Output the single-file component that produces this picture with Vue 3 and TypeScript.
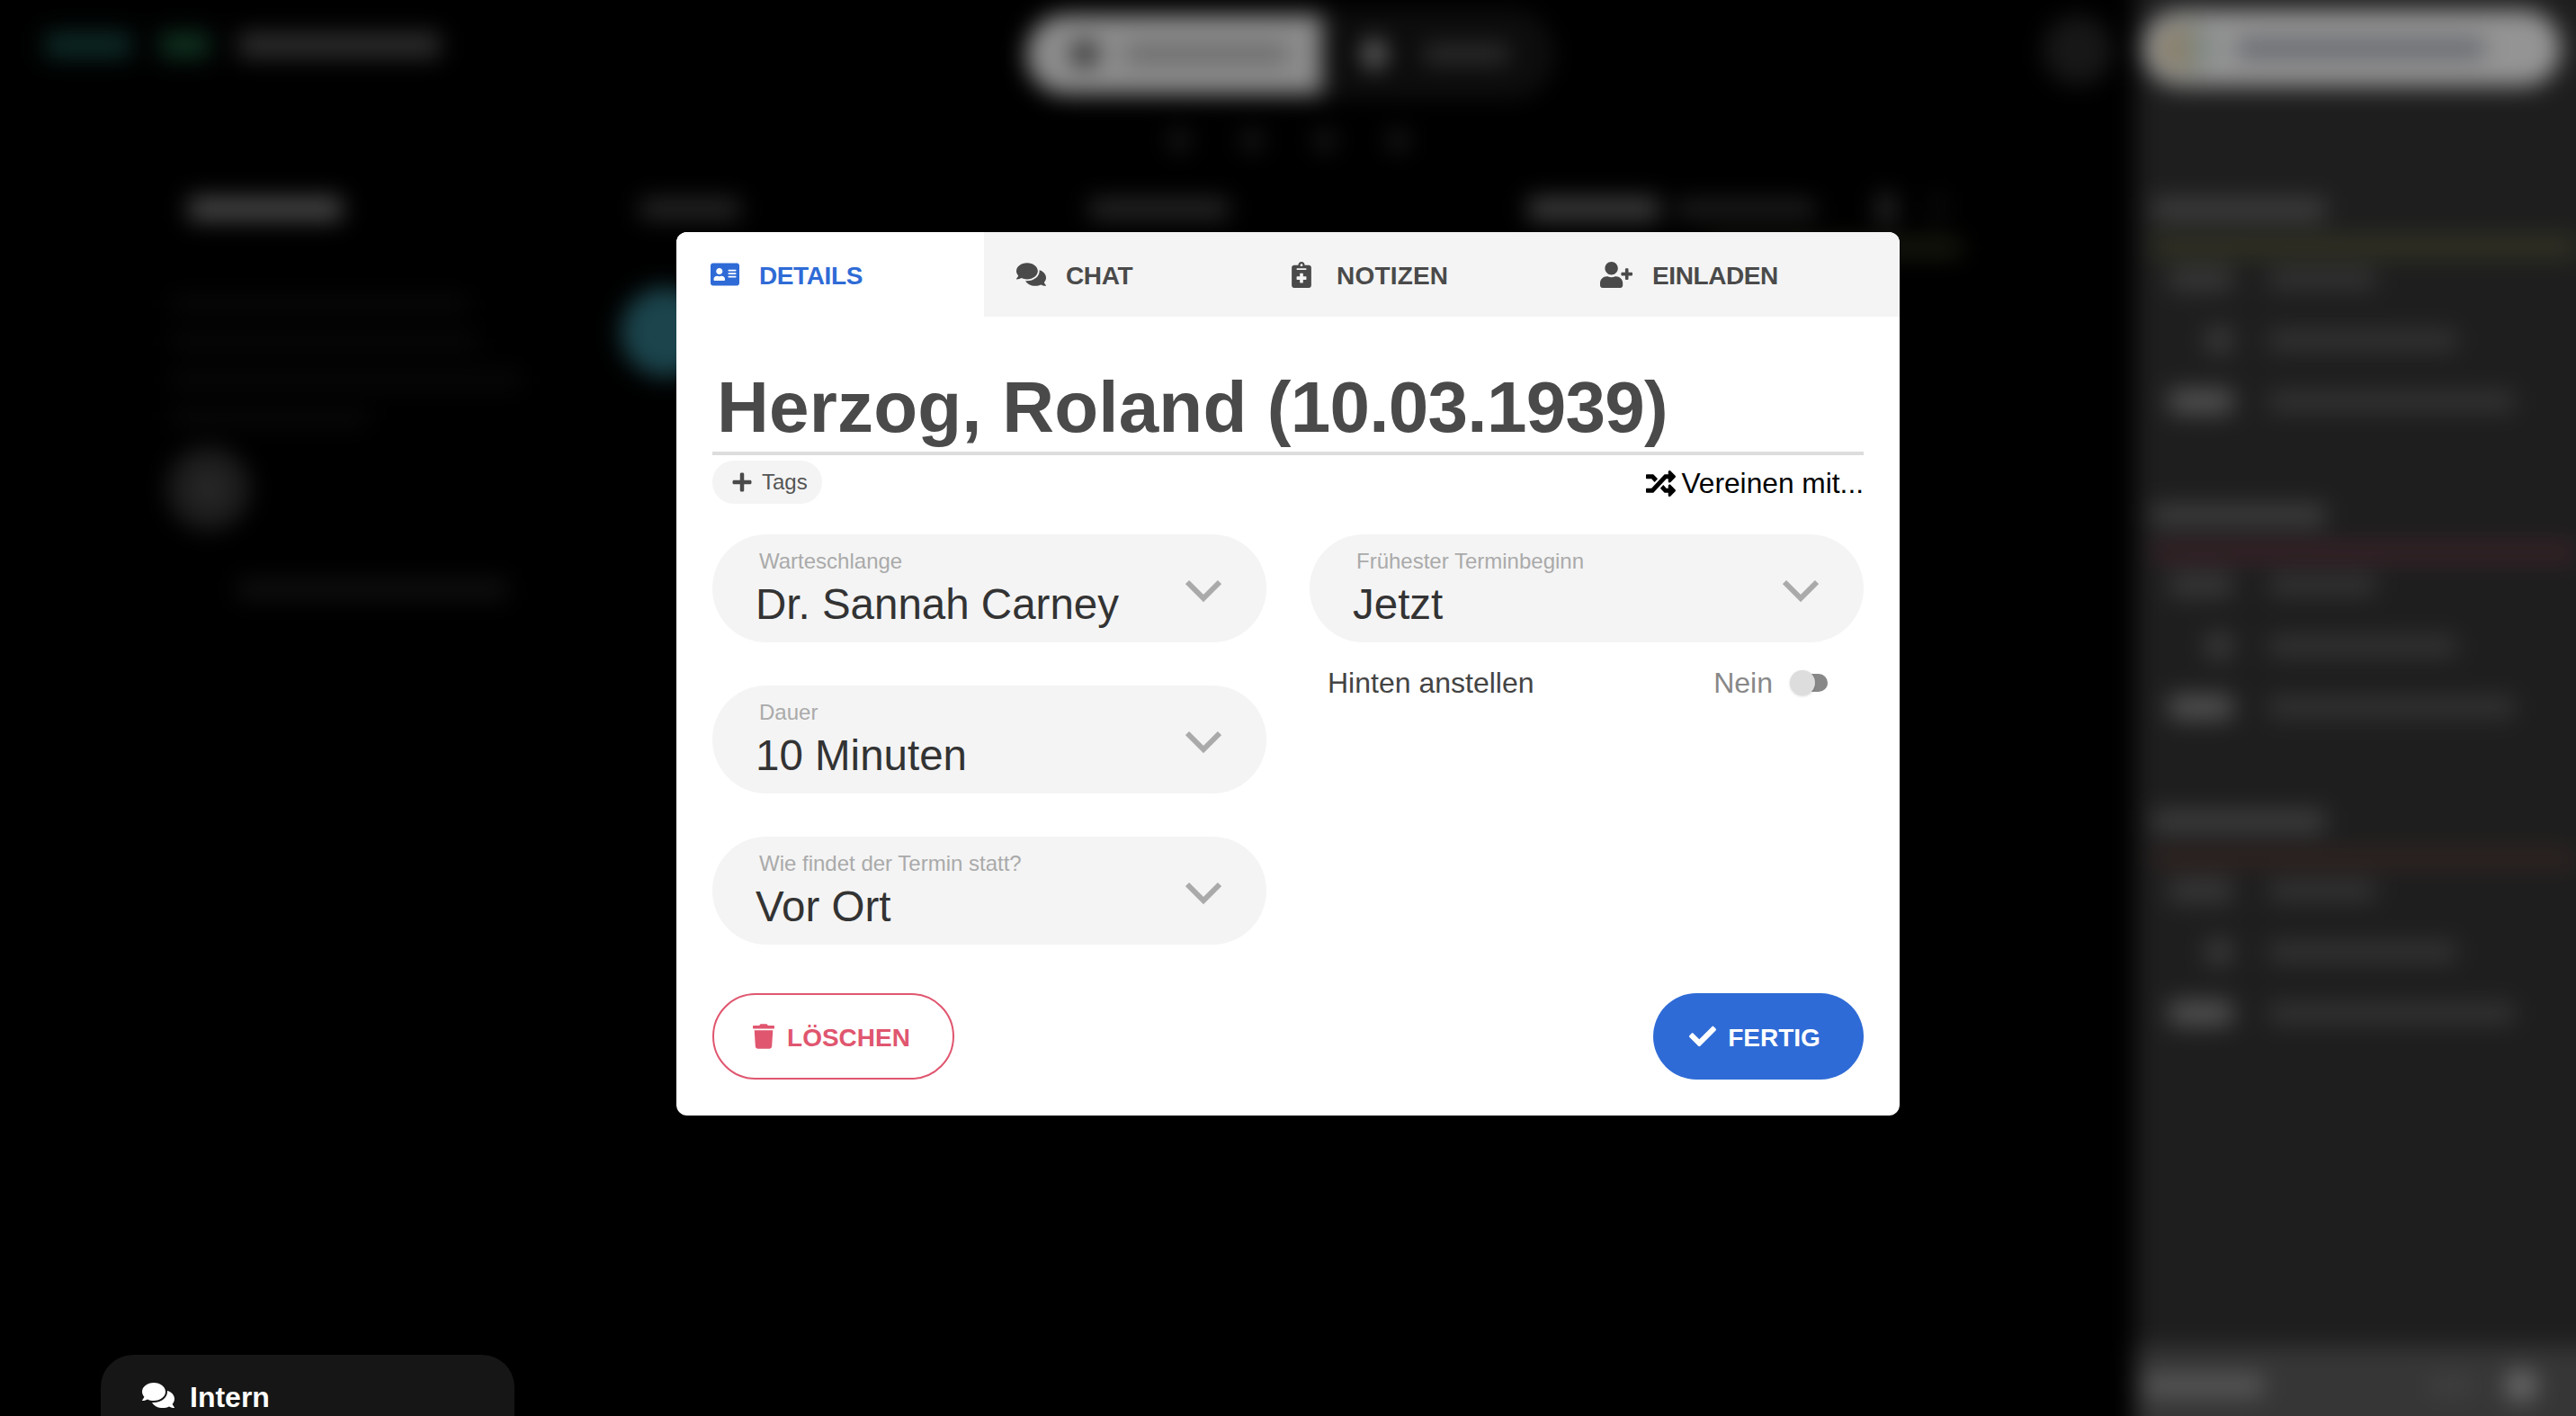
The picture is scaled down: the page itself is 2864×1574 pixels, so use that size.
<template>
  <div class="page">
    <!-- blurred app behind the dialog -->
    <div class="backdrop">
      <div class="main">
        <div class="topbar">
          <div class="logo">
            <div class="logoTeal"></div>
            <div class="logoGreen"></div>
            <div class="logoName"></div>
          </div>
          <div class="pillActive">
            <div class="pillDot"></div>
            <div class="pillText"></div>
          </div>
          <div class="pillIdle">
            <div class="idleDot"></div>
            <div class="idleText"></div>
          </div>
          <div class="roundBtn"></div>
        </div>
        <div class="dots">
          <div v-for="i in 4" :key="i" class="dot"></div>
        </div>
        <div class="heads">
          <div class="headMain"></div>
          <div class="headSmall first"></div>
          <div class="headSmall second"></div>
          <div class="headDate"></div>
          <div class="headDateDim"></div>
          <div class="headMark"></div>
          <div class="headMark far"></div>
        </div>
        <div class="dateStrip"></div>
        <div class="content">
          <div class="leftCol">
            <div v-for="w in leftLines" :key="w" class="faintLine" :style="{ width: w + 'px' }"></div>
            <div class="addCircle"></div>
            <div class="leftFoot"></div>
          </div>
          <div class="tealCircle"></div>
        </div>
      </div>
      <div class="side">
        <div class="userPill">
          <div class="avatar"></div>
          <div class="userName"></div>
        </div>
        <div v-for="s in sections" :key="s.accent" class="section">
          <div class="sectionHead"></div>
          <div class="sectionBar" :style="{ background: s.accent }"></div>
          <div class="row firstRow">
            <div class="iconCell"><div class="rowIcon wide dim"></div></div>
            <div class="rowText" :style="{ width: '118px' }"></div>
          </div>
          <div class="row">
            <div class="iconCell"><div class="rowIcon"></div></div>
            <div class="rowText" :style="{ width: '208px' }"></div>
          </div>
          <div class="row">
            <div class="iconCell"><div class="rowIcon wide"></div></div>
            <div class="rowText" :style="{ width: '272px' }"></div>
          </div>
        </div>
        <div class="sideFoot">
          <div class="footText"></div>
          <div class="footDim"></div>
          <div class="footDot"></div>
        </div>
      </div>
    </div>

    <div class="dock">
      <svg class="dockIcon" viewBox="0 0 576 512"><path :d="icons.comments" /></svg>
      <span>Intern</span>
    </div>

    <div class="overlay">
      <div class="dialog">
        <div class="tabs">
          <div v-for="t in tabs" :key="t.label" class="tab" :class="{ active: t.active }">
            <svg :class="t.cls" :viewBox="t.box"><path :d="t.path" /></svg>
            <span>{{ t.label }}</span>
          </div>
        </div>

        <div class="body">
          <div class="title"><span class="titleName">Herzog, Roland</span> <span class="titleDate">(10.03.1939)</span></div>

          <div class="tagRow">
            <div class="tagChip">
              <svg class="plusIcon" viewBox="0 0 448 512"><path :d="icons.plus" /></svg>
              <span>Tags</span>
            </div>
            <div class="merge">
              <svg class="mergeIcon" viewBox="0 0 512 512"><path :d="icons.random" /></svg>
              <span>Vereinen mit...</span>
            </div>
          </div>

          <div class="form">
            <div class="column">
              <div v-for="f in leftFields" :key="f.label" class="select">
                <div class="selectText">
                  <div class="selectLabel">{{ f.label }}</div>
                  <div class="selectValue">{{ f.value }}</div>
                </div>
                <svg class="chevron" viewBox="0 0 40 26"><polyline points="2,3 20,21 38,3" /></svg>
              </div>
            </div>
            <div class="column right">
              <div class="select">
                <div class="selectText">
                  <div class="selectLabel">Frühester Terminbeginn</div>
                  <div class="selectValue">Jetzt</div>
                </div>
                <svg class="chevron" viewBox="0 0 40 26"><polyline points="2,3 20,21 38,3" /></svg>
              </div>
              <div class="switchRow">
                <span class="switchLabel">Hinten anstellen</span>
                <span class="switchState">Nein</span>
                <div class="toggle"><div class="knob"></div></div>
              </div>
            </div>
          </div>

          <div class="actions">
            <button class="btn danger">
              <svg class="trashIcon" viewBox="0 0 448 512"><path :d="icons.trash" /></svg>
              <span>LÖSCHEN</span>
            </button>
            <button class="btn primary">
              <svg class="checkIcon" viewBox="0 0 512 512"><path :d="icons.check" /></svg>
              <span>FERTIG</span>
            </button>
          </div>
        </div>
      </div>
    </div>
  </div>
</template>

<script setup lang="ts">
const icons = {
  idCard:
    'M528 32H48C21.5 32 0 53.5 0 80v352c0 26.5 21.5 48 48 48h480c26.5 0 48-21.5 48-48V80c0-26.5-21.5-48-48-48zm-352 96c35.3 0 64 28.7 64 64s-28.7 64-64 64-64-28.7-64-64 28.7-64 64-64zm112 236.8c0 10.6-10 19.2-22.4 19.2H86.4C74 384 64 375.4 64 364.8v-19.2c0-31.8 30.1-57.6 67.2-57.6h5c12.3 5.1 25.7 8 39.8 8s27.6-2.9 39.8-8h5c37.1 0 67.2 25.8 67.2 57.6v19.2zM512 312c0 4.4-3.6 8-8 8H360c-4.4 0-8-3.6-8-8v-16c0-4.4 3.6-8 8-8h144c4.4 0 8 3.6 8 8v16zm0-64c0 4.4-3.6 8-8 8H360c-4.4 0-8-3.6-8-8v-16c0-4.4 3.6-8 8-8h144c4.4 0 8 3.6 8 8v16zm0-64c0 4.4-3.6 8-8 8H360c-4.4 0-8-3.6-8-8v-16c0-4.4 3.6-8 8-8h144c4.4 0 8 3.6 8 8v16z',
  comments:
    'M416 192c0-88.4-93.1-160-208-160S0 103.6 0 192c0 34.3 14.1 65.9 38 92-13.4 30.2-35.5 54.2-35.8 54.5-2.2 2.3-2.8 5.7-1.5 8.7S4.8 352 8 352c36.6 0 66.9-12.3 88.7-25 32.2 15.7 70.3 25 111.3 25 114.9 0 208-71.6 208-160zm122 220c23.9-26 38-57.7 38-92 0-66.9-53.5-124.2-129.3-148.1.9 6.6 1.3 13.3 1.3 20.1 0 105.9-107.7 192-240 192-10.8 0-21.3-.8-31.7-1.9C207.8 439.6 281.8 480 368 480c41 0 79.1-9.2 111.3-25 21.8 12.7 52.1 25 88.7 25 3.2 0 6.1-1.9 7.3-4.8 1.3-2.9.7-6.3-1.5-8.7-.3-.3-22.4-24.2-35.8-54.5z',
  notes:
    'M336 64h-80c0-35.3-28.7-64-64-64s-64 28.7-64 64H48C21.5 64 0 85.5 0 112v352c0 26.5 21.5 48 48 48h288c26.5 0 48-21.5 48-48V112c0-26.5-21.5-48-48-48zM192 40c13.3 0 24 10.7 24 24s-10.7 24-24 24-24-10.7-24-24 10.7-24 24-24zm96 304c0 4.4-3.6 8-8 8h-56v56c0 4.4-3.6 8-8 8h-48c-4.4 0-8-3.6-8-8v-56h-56c-4.4 0-8-3.6-8-8v-48c0-4.4 3.6-8 8-8h56v-56c0-4.4 3.6-8 8-8h48c4.4 0 8 3.6 8 8v56h56c4.4 0 8 3.6 8 8v48zm0-192c0 4.4-3.6 8-8 8H104c-4.4 0-8-3.6-8-8v-16c0-4.4 3.6-8 8-8h176c4.4 0 8 3.6 8 8v16z',
  userPlus:
    'M624 208h-64v-64c0-8.8-7.2-16-16-16h-32c-8.8 0-16 7.2-16 16v64h-64c-8.8 0-16 7.2-16 16v32c0 8.8 7.2 16 16 16h64v64c0 8.8 7.2 16 16 16h32c8.8 0 16-7.2 16-16v-64h64c8.8 0 16-7.2 16-16v-32c0-8.8-7.2-16-16-16zm-400 48c70.7 0 128-57.3 128-128S294.7 0 224 0 96 57.3 96 128s57.3 128 128 128zm89.6 32h-16.7c-22.2 10.2-46.9 16-72.9 16s-50.6-5.8-72.9-16h-16.7C60.2 288 0 348.2 0 422.4V464c0 26.5 21.5 48 48 48h352c26.5 0 48-21.5 48-48v-41.6c0-74.2-60.2-134.4-134.4-134.4z',
  plus:
    'M416 208H272V64c0-17.67-14.33-32-32-32h-32c-17.67 0-32 14.33-32 32v144H32c-17.67 0-32 14.33-32 32v32c0 17.67 14.33 32 32 32h144v144c0 17.67 14.33 32 32 32h32c17.67 0 32-14.33 32-32V304h144c17.67 0 32-14.33 32-32v-32c0-17.67-14.33-32-32-32z',
  random:
    'M504.971 359.029c9.373 9.373 9.373 24.569 0 33.941l-80 79.984c-15.01 15.01-40.971 4.49-40.971-16.971V416h-58.785a12.004 12.004 0 0 1-8.773-3.812l-70.556-75.596 53.333-57.143L352 336h32v-39.981c0-21.438 25.943-31.998 40.971-16.971l80 79.981zM12 176h84l52.781 56.551 53.333-57.143-70.556-75.596A11.999 11.999 0 0 0 122.785 96H12c-6.627 0-12 5.373-12 12v56c0 6.627 5.373 12 12 12zm372 0v39.984c0 21.46 25.961 31.98 40.971 16.971l80-79.984c9.373-9.373 9.373-24.569 0-33.941l-80-79.981C409.943 24.021 384 34.582 384 56.019V96h-58.785a12.004 12.004 0 0 0-8.773 3.812L96 336H12c-6.627 0-12 5.373-12 12v56c0 6.627 5.373 12 12 12h110.785c3.326 0 6.503-1.381 8.773-3.812L352 176h32z',
  trash:
    'M432 32H312l-9.4-18.7A24 24 0 0 0 281.1 0H166.8a23.72 23.72 0 0 0-21.4 13.3L136 32H16A16 16 0 0 0 0 48v32a16 16 0 0 0 16 16h416a16 16 0 0 0 16-16V48a16 16 0 0 0-16-16zM53.2 467a48 48 0 0 0 47.9 45h245.8a48 48 0 0 0 47.9-45L416 128H32z',
  check:
    'M173.898 439.404l-166.4-166.4c-9.997-9.997-9.997-26.206 0-36.204l36.203-36.204c9.997-9.998 26.207-9.998 36.204 0L192 312.69 432.095 72.596c9.997-9.997 26.207-9.997 36.204 0l36.203 36.204c9.997 9.997 9.997 26.206 0 36.204l-294.4 294.401c-9.998 9.997-26.207 9.997-36.204-.001z',
};

const tabs = [
  { label: 'DETAILS', path: icons.idCard, box: '0 0 576 512', cls: 'tabIcon idIcon', active: true },
  { label: 'CHAT', path: icons.comments, box: '0 0 576 512', cls: 'tabIcon chatIcon', active: false },
  { label: 'NOTIZEN', path: icons.notes, box: '0 0 384 512', cls: 'tabIcon noteIcon', active: false },
  { label: 'EINLADEN', path: icons.userPlus, box: '0 0 640 512', cls: 'tabIcon inviteIcon', active: false },
];

const leftFields = [
  { label: 'Warteschlange', value: 'Dr. Sannah Carney' },
  { label: 'Dauer', value: '10 Minuten' },
  { label: 'Wie findet der Termin statt?', value: 'Vor Ort' },
];

const leftLines = [330, 340, 390, 220];

const sections = [{ accent: '#333324' }, { accent: '#372127' }, { accent: '#2f2321' }];
</script>

<style>
html,
body {
  margin: 0;
  background: #000;
  overflow: hidden;
}
</style>

<style scoped>
.page {
  position: relative;
  width: 2864px;
  height: 1574px;
  overflow: hidden;
  background: #000;
  font-family: "Liberation Sans", Arial, sans-serif;
}

/* backdrop: runs 40px past the window so the blur does not fade at the edges */
.backdrop {
  display: grid;
  grid-template-columns: 2374px 530px;
  width: 2904px;
  height: 1654px;
  margin-top: -40px;
  filter: blur(13px);
}
.main {
  padding-top: 40px;
}
.topbar {
  display: flex;
  align-items: center;
  height: 120px;
}
.logo {
  display: flex;
  gap: 32px;
  align-self: flex-start;
  margin: 36px 0 0 50px;
}
.logo div {
  height: 28px;
}
.logoTeal {
  width: 96px;
  background: #0e2c28;
}
.logoGreen {
  width: 55px;
  background: #103322;
}
.logoName {
  width: 224px;
  background: #2e2e2e;
}
.pillActive {
  display: flex;
  align-items: center;
  width: 329px;
  height: 89px;
  margin-left: 652px;
  background: #8c8c8c;
  border-radius: 44px 0 0 44px;
  box-sizing: border-box;
  padding-left: 50px;
  gap: 30px;
}
.pillDot {
  width: 30px;
  height: 30px;
  border-radius: 50%;
  background: #333;
}
.pillText {
  width: 180px;
  height: 22px;
  background: #6c6c6c;
}
.pillIdle {
  display: flex;
  align-items: center;
  width: 254px;
  height: 89px;
  background: #0c0c0c;
  border: 3px solid #2a2a2a;
  border-left: 0;
  border-radius: 0 44px 44px 0;
  box-sizing: border-box;
  padding-left: 44px;
  gap: 40px;
}
.idleDot {
  width: 28px;
  height: 34px;
  border-radius: 50%;
  background: #666;
}
.idleText {
  width: 96px;
  height: 20px;
  background: #303030;
}
.roundBtn {
  width: 78px;
  height: 78px;
  margin: -8px 0 0 547px;
  border-radius: 50%;
  background: #171717;
}
.dots {
  display: flex;
  gap: 57px;
  margin: 24px 0 0 1299px;
}
.dot {
  width: 24px;
  height: 24px;
  border-radius: 50%;
  background: #1c1c1c;
}
.heads {
  display: flex;
  align-items: center;
  height: 40px;
  margin-top: 44px;
}
.headMain {
  width: 170px;
  height: 26px;
  margin-left: 210px;
  background: #484848;
}
.headSmall {
  height: 22px;
  background: #282828;
}
.first {
  width: 110px;
  margin-left: 332px;
}
.second {
  width: 155px;
  margin-left: 389px;
}
.headDate {
  width: 146px;
  height: 26px;
  margin-left: 333px;
  background: #3c3c3c;
}
.headDateDim {
  width: 155px;
  height: 18px;
  margin-left: 18px;
  background: #222;
}
.headMark {
  width: 20px;
  height: 34px;
  margin-left: 69px;
  background: #282828;
}
.far {
  width: 6px;
  margin-left: 45px;
  background: #1e1e1e;
}
.dateStrip {
  width: 280px;
  height: 18px;
  margin: 14px 0 0 1900px;
  background: #1d1d12;
}
.content {
  display: flex;
  margin-top: 35px;
}
.leftCol {
  display: flex;
  flex-direction: column;
  gap: 24px;
  width: 400px;
  margin-left: 190px;
  padding-top: 10px;
}
.faintLine {
  height: 18px;
  background: #090909;
}
.addCircle {
  width: 92px;
  height: 92px;
  margin-left: -4px;
  border-radius: 50%;
  background: radial-gradient(circle, #343434 0 14%, #1e1e1e 18%);
}
.leftFoot {
  width: 300px;
  height: 24px;
  margin: 30px 0 0 74px;
  background: #0f0f0f;
}
.tealCircle {
  width: 100px;
  height: 100px;
  margin-left: 100px;
  border-radius: 50%;
  background: #1b444c;
}
.side {
  background: #1e1e1e;
  display: flex;
  flex-direction: column;
  padding-top: 51px;
  box-sizing: border-box;
}
.userPill {
  display: flex;
  align-items: center;
  width: 465px;
  height: 85px;
  margin-left: 8px;
  border-radius: 42px;
  background: #949494;
  gap: 26px;
  box-sizing: border-box;
  padding-left: 20px;
}
.avatar {
  width: 60px;
  height: 60px;
  border-radius: 50%;
  background: linear-gradient(90deg, #8c7a5c, #7f8e90);
}
.userName {
  width: 274px;
  height: 22px;
  background: #66686e;
}
.section {
  height: 340px;
  margin-left: 19px;
}
.userPill + .section {
  margin-top: 124px;
}
.sectionHead {
  width: 192px;
  height: 26px;
  background: #3c3c3c;
}
.sectionBar {
  width: 470px;
  height: 22px;
  margin-top: 17px;
}
.row {
  display: flex;
  align-items: center;
  gap: 40px;
  height: 68px;
}
.firstRow {
  margin-top: -9px;
}
.iconCell {
  display: flex;
  justify-content: flex-end;
  width: 90px;
}
.rowIcon {
  width: 32px;
  height: 32px;
  border-radius: 50%;
  background: #3a3a3a;
}
.rowIcon.wide {
  width: 72px;
  height: 28px;
  border-radius: 8px;
  background: #505050;
}
.rowIcon.dim {
  background: #363636;
}
.rowText {
  height: 22px;
  background: #343434;
}
.sideFoot {
  display: flex;
  align-items: center;
  height: 117px;
  margin-top: auto;
  background: #363636;
  box-sizing: border-box;
  padding: 0 0 31px 9px;
}
.footText {
  width: 133px;
  height: 24px;
  background: #585858;
}
.footDim {
  width: 50px;
  height: 16px;
  margin-left: 184px;
  background: #424242;
}
.footDot {
  width: 36px;
  height: 36px;
  margin-left: 35px;
  border-radius: 50%;
  background: #6a6a6a;
}

/* chat dock, stays sharp above the blur */
.dock {
  position: absolute;
  left: 112px;
  bottom: 0;
  display: flex;
  align-items: flex-start;
  gap: 17px;
  width: 460px;
  height: 68px;
  box-sizing: border-box;
  padding: 29px 0 0 46px;
  background: #161616;
  border-radius: 36px 36px 0 0;
  color: #fff;
  font-size: 32px;
  font-weight: 700;
  line-height: 36px;
}
.dockIcon {
  width: 36px;
  height: 32px;
  fill: #fff;
}

/* dialog */
.overlay {
  position: absolute;
  inset: 0;
  display: flex;
  justify-content: center;
  align-items: flex-start;
  padding-top: 258px;
  box-sizing: border-box;
}
.dialog {
  width: 1360px;
  height: 982px;
  background: #fff;
  border-radius: 12px;
  overflow: hidden;
}
.tabs {
  display: grid;
  grid-template-columns: 342px 306px 343px 369px;
  height: 94px;
  background: #f4f4f4;
}
.tab {
  display: flex;
  align-items: center;
  gap: 22px;
  padding-left: 36px;
  color: #4a4a4a;
  font-size: 28px;
  font-weight: 700;
  letter-spacing: -0.4px;
}
.tab span {
  padding-top: 4px;
}
.tab.active {
  background: #fff;
  color: #2f6bd6;
  padding-left: 38px;
}
.tabIcon {
  fill: currentColor;
  flex: none;
}
.idIcon {
  width: 32px;
  height: 32px;
}
.chatIcon {
  width: 33px;
  height: 30px;
}
.noteIcon {
  width: 22px;
  height: 29px;
  margin-right: 6px;
}
.noteIcon + span {
  letter-spacing: 0.2px;
}
.inviteIcon {
  width: 36px;
  height: 29px;
}
.body {
  padding: 0 40px;
}
.title {
  box-sizing: border-box;
  height: 154px;
  padding: 53px 0 0 5px;
  border-bottom: 4px solid #ddd;
  color: #4a4a4a;
  font-size: 80px;
  font-weight: 700;
  line-height: 96px;
  white-space: nowrap;
}
.titleName {
  letter-spacing: 0.2px;
}
.titleDate {
  letter-spacing: -0.7px;
}
.tagRow {
  display: flex;
  align-items: center;
  justify-content: space-between;
  margin-top: 6px;
}
.tagChip {
  display: flex;
  align-items: center;
  gap: 11px;
  height: 48px;
  padding: 0 16px 0 22px;
  border-radius: 24px;
  background: #f4f4f4;
  color: #555;
  font-size: 24px;
}
.plusIcon {
  width: 22px;
  height: 24px;
  fill: #4a4a4a;
}
.merge {
  display: flex;
  align-items: center;
  gap: 6px;
  color: #000;
  font-size: 31.7px;
  padding-top: 2px;
}
.mergeIcon {
  width: 33px;
  height: 33px;
  fill: #000;
}
.form {
  display: grid;
  grid-template-columns: 616px 616px;
  gap: 48px;
  margin-top: 34px;
}
.column {
  display: flex;
  flex-direction: column;
  gap: 48px;
}
.column.right {
  gap: 25px;
}
.select {
  display: flex;
  align-items: center;
  height: 120px;
  box-sizing: border-box;
  padding: 0 50px 0 48px;
  border-radius: 60px;
  background: #f4f4f4;
}
.selectText {
  flex: 1;
  align-self: flex-start;
  padding-top: 16px;
}
.selectLabel {
  margin-left: 4px;
  color: #aaa;
  font-size: 24px;
  line-height: 28px;
}
.selectValue {
  margin-top: 6px;
  color: #333;
  font-size: 47.5px;
  line-height: 56px;
}
.chevron {
  width: 40px;
  height: 26px;
  margin-top: 6px;
  fill: none;
  stroke: #aaa;
  stroke-width: 6;
}
.switchRow {
  display: flex;
  align-items: center;
  height: 40px;
  padding: 0 40px 0 20px;
  font-size: 32px;
}
.switchLabel {
  flex: 1;
  color: #444;
}
.switchState {
  color: #888;
  margin-right: 21px;
}
.toggle {
  position: relative;
  width: 40px;
  height: 20px;
  border-radius: 10px;
  background: #888;
}
.knob {
  position: absolute;
  left: -2px;
  top: -4px;
  width: 28px;
  height: 28px;
  border-radius: 50%;
  background: #ddd;
  box-shadow: 0 1px 3px rgba(0, 0, 0, 0.15);
}
.actions {
  display: flex;
  justify-content: space-between;
  margin-top: 54px;
}
.btn {
  display: flex;
  align-items: center;
  justify-content: center;
  height: 96px;
  border-radius: 48px;
  box-sizing: border-box;
  font-family: inherit;
  font-size: 28px;
  font-weight: 700;
}
.btn span {
  padding-top: 3px;
}
.danger {
  width: 269px;
  gap: 14px;
  padding: 0 4px 0 0;
  background: #fff;
  border: 2px solid #e0566f;
  color: #e0566f;
}
.primary {
  width: 234px;
  gap: 13px;
  padding: 0 8px 0 0;
  background: #2f6bd6;
  border: 0;
  color: #fff;
}
.trashIcon {
  width: 24px;
  height: 28px;
  fill: #e0566f;
}
.checkIcon {
  width: 30px;
  height: 30px;
  fill: #fff;
}
</style>
